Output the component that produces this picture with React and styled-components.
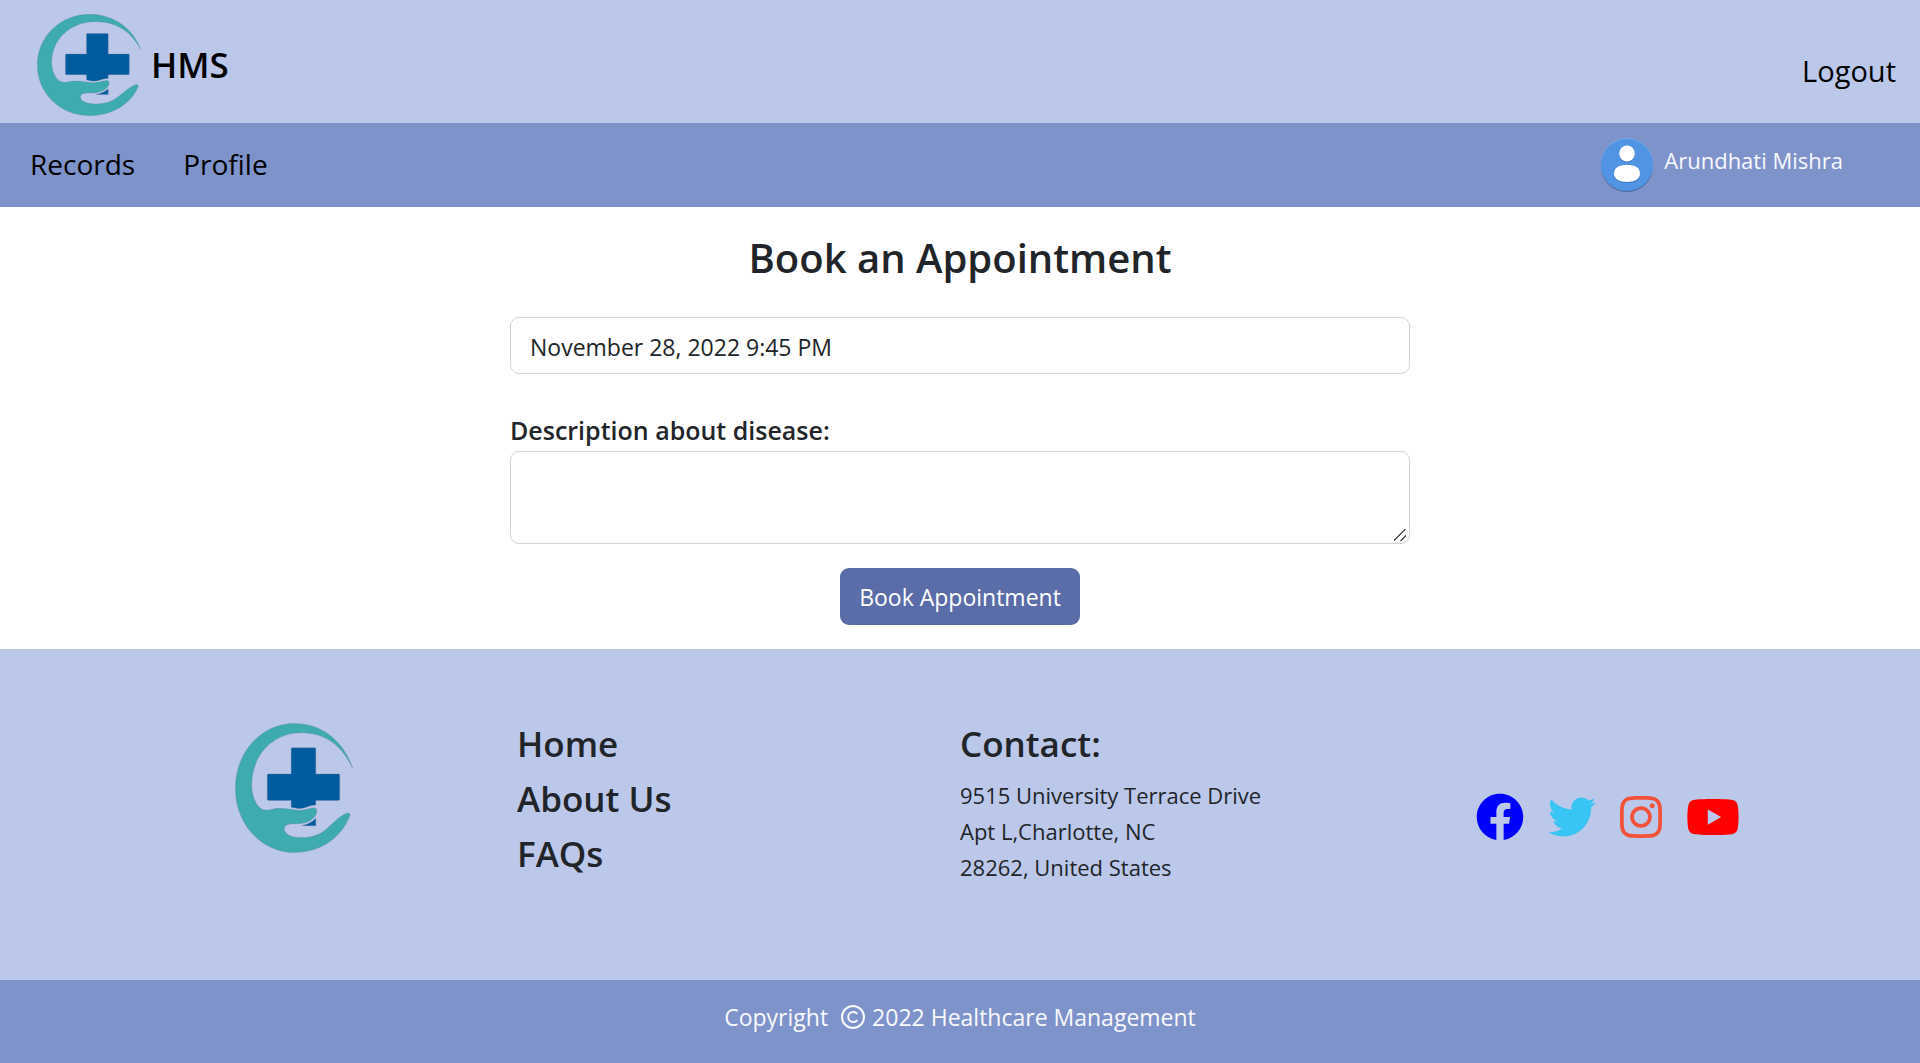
import React, { useState } from "react";
import styled, { createGlobalStyle } from "styled-components";
import { FaFacebook, FaTwitter, FaInstagram, FaYoutube } from "react-icons/fa";

const GlobalStyle = createGlobalStyle`
  *, *::before, *::after { box-sizing: border-box; }
  body {
    margin: 0;
    background: #fff;
    color: #212529;
    font-family: "Open Sans", "Noto Sans", sans-serif;
    font-size: 23px;
    line-height: 36px;
  }
  h1, h2, p { margin: 0; }
  a { color: inherit; text-decoration: none; }
`;

const Page = styled.div`
  display: flex;
  flex-direction: column;
  min-height: 100vh;
`;

const Header = styled.header`
  display: flex;
  justify-content: space-between;
  align-items: center;
  height: 123px;
  padding: 0 24px 0 37px;
  background: #bcc8ea;
  color: #000;
`;

const Brand = styled.a`
  display: flex;
  align-items: center;
  gap: 10px;
  padding-top: 6px;
  font-size: 35px;
  font-weight: 600;
`;

const NavLink = styled.a`
  color: #000;
  font-size: 28px;
  line-height: 42px;
`;

const LogoutLink = styled(NavLink)`
  padding-top: 19px;
  font-size: 29px;
`;

const NavBar = styled.nav`
  display: flex;
  justify-content: space-between;
  align-items: center;
  height: 84px;
  padding: 0 77px 0 30px;
  background: #7e93ca;
`;

const NavLinks = styled.div`
  display: flex;
  gap: 48px;
  padding-bottom: 2px;
`;

const User = styled.div`
  display: flex;
  align-items: flex-start;
  gap: 11px;
  color: #f8f9fa;
  font-size: 22px;
  line-height: 44px;
`;

const Main = styled.main`
  flex: 1;
  padding: 24px 24px;
`;

const Form = styled.form`
  display: flex;
  flex-direction: column;
  width: 100%;
  max-width: 900px;
  margin: 0 auto;
`;

const Title = styled.h1`
  margin-bottom: 33px;
  font-size: 40px;
  font-weight: 600;
  line-height: 53px;
  text-align: center;
`;

const fieldStyle = `
  width: 100%;
  border: 1px solid #ced4da;
  border-radius: 9px;
  background: #fff;
  color: #212529;
  font: inherit;
`;

const DateInput = styled.input`
  ${fieldStyle}
  height: 57px;
  margin-bottom: 38px;
  padding: 2px 19px 0;
`;

const Label = styled.label`
  margin-bottom: 3px;
  font-size: 25px;
  font-weight: 600;
  line-height: 36px;
`;

const TextArea = styled.textarea`
  ${fieldStyle}
  height: 93px;
  padding: 9px 19px;
  resize: vertical;

  &::-webkit-resizer {
    background: linear-gradient(
        135deg,
        transparent 44%,
        #555 44%,
        #555 53%,
        transparent 53%,
        transparent 71%,
        #555 71%,
        #555 80%,
        transparent 80%
      )
      0 1px / 12px 12px no-repeat;
  }
`;

const SubmitButton = styled.button`
  align-self: center;
  height: 57px;
  margin-top: 24px;
  padding: 1px 19px 0;
  border: 0;
  border-radius: 9px;
  background: #5a6da8;
  color: #fff;
  font: inherit;
`;

const Footer = styled.footer`
  display: grid;
  grid-template-columns: 282fr 443fr 516fr auto;
  align-items: start;
  min-height: 331px;
  padding: 73px 180px 78px 235px;
  background: #bcc8ea;
`;

const FooterLinks = styled.div`
  display: flex;
  flex-direction: column;
  gap: 12px;
`;

const footerHeading = `
  font-size: 35px;
  font-weight: 600;
  line-height: 43px;
`;

const FooterLink = styled.a`
  ${footerHeading}
`;

const FooterTitle = styled.h2`
  ${footerHeading}
  margin-bottom: 12px;
`;

const Address = styled.address`
  font-size: 22px;
  font-style: normal;
`;

const Socials = styled.div`
  display: flex;
  gap: 24px;
  padding-top: 71px;
`;

const SocialLink = styled.a`
  display: flex;
  color: ${(p) => p.$color};

  svg {
    width: ${(p) => p.$width}px;
    height: 48px;
  }
`;

const FooterLogo = styled.div`
  padding-top: 1px;
`;

const Copyright = styled.div`
  display: flex;
  justify-content: center;
  align-items: center;
  height: 83px;
  padding-bottom: 9px;
  background: #7e93ca;
  color: #f8f9fa;
`;

const CopyrightIcon = styled.svg`
  width: 24px;
  height: 24px;
  margin: 0 7px 0 13px;
`;

function Logo({ width, height }) {
  return (
    <svg
      width={width}
      height={height}
      viewBox="110 41 311 304"
      preserveAspectRatio="none"
      role="img"
      aria-label="HMS logo"
    >
      <g stroke="#71809f" strokeOpacity="0.55" strokeWidth="1.5" strokeLinejoin="round">
        <path
          fill="#3dabb0"
          d="M420 147C397 82 337 42 267 42C180 42 111 108 111 194C111 279 181 344 267 344C332 344 390 312 413 257C414 251 407 250 401 253C379 262 361 284 337 298C313 310 277 312 256 305C243 300 237 291 241 284C247 274 268 278 285 276C302 274 325 264 326 246C326 239 319 239 312 240C301 242 290 246 277 245C258 244 240 239 216 241C205 243 194 247 183 243C167 238 154 212 154 186C154 118 208 64 284 64C342 64 389 88 420 147Z"
        />
        <path
          fill="#005b9f"
          d="M260 99H321Q323 99 323 102V160H384Q386 160 386 163V219Q386 222 383 222H323V233C306 233 296 241 282 241C272 241 265 239 258 238V222H198Q195 222 195 219V163Q195 160 198 160H258V102Q258 99 260 99Z"
        />
        <path fill="#005b9f" d="M323 264V281H286C302 278 314 273 323 264Z" />
      </g>
    </svg>
  );
}

function Avatar() {
  return (
    <svg width="52" height="54" viewBox="0 0 52 54" aria-hidden="true">
      <circle cx="26" cy="28" r="26" fill="#4d6698" />
      <circle cx="26" cy="26" r="26" fill="#73a9e8" />
      <circle cx="26" cy="27" r="26" fill="#5094e3" />
      <ellipse cx="26" cy="16.5" rx="7.8" ry="8" fill="#3b77c0" />
      <ellipse cx="26" cy="15.5" rx="7.8" ry="8" fill="#fff" />
      <path fill="#3b77c0" d="M13 37C13 30 18 27 26 27S39 30 39 37C39 42 33 45 26 45S13 42 13 37Z" />
      <path fill="#fff" d="M13 36C13 29 18 27 26 27S39 29 39 36C39 41 33 44 26 44S13 41 13 36Z" />
    </svg>
  );
}

const socials = [
  { name: "Facebook", Icon: FaFacebook, color: "#0000ff", width: 48 },
  { name: "Twitter", Icon: FaTwitter, color: "#38c5f3", width: 48 },
  { name: "Instagram", Icon: FaInstagram, color: "#f4513b", width: 42 },
  { name: "YouTube", Icon: FaYoutube, color: "#ff0000", width: 54 },
];

export default function App() {
  const [date, setDate] = useState("November 28, 2022 9:45 PM");
  const [description, setDescription] = useState("");

  return (
    <>
      <GlobalStyle />
      <Page>
        <Header>
          <Brand href="#">
            <Logo width={104} height={102} />
            HMS
          </Brand>
          <LogoutLink href="#">Logout</LogoutLink>
        </Header>
        <NavBar>
          <NavLinks>
            <NavLink href="#">Records</NavLink>
            <NavLink href="#">Profile</NavLink>
          </NavLinks>
          <User>
            <Avatar />
            Arundhati Mishra
          </User>
        </NavBar>
        <Main>
          <Form onSubmit={(e) => e.preventDefault()}>
            <Title>Book an Appointment</Title>
            <DateInput
              type="text"
              aria-label="Appointment date and time"
              value={date}
              onChange={(e) => setDate(e.target.value)}
            />
            <Label htmlFor="description">Description about disease:</Label>
            <TextArea
              id="description"
              value={description}
              onChange={(e) => setDescription(e.target.value)}
            />
            <SubmitButton type="submit">Book Appointment</SubmitButton>
          </Form>
        </Main>
        <Footer>
          <FooterLogo>
            <Logo width={118} height={130} />
          </FooterLogo>
          <FooterLinks>
            <FooterLink href="#">Home</FooterLink>
            <FooterLink href="#">About Us</FooterLink>
            <FooterLink href="#">FAQs</FooterLink>
          </FooterLinks>
          <div>
            <FooterTitle>Contact:</FooterTitle>
            <Address>
              9515 University Terrace Drive
              <br />
              Apt L,Charlotte, NC
              <br />
              28262, United States
            </Address>
          </div>
          <Socials>
            {socials.map(({ name, Icon, color, width }) => (
              <SocialLink key={name} href="#" aria-label={name} $color={color} $width={width}>
                <Icon />
              </SocialLink>
            ))}
          </Socials>
        </Footer>
        <Copyright>
          Copyright
          <CopyrightIcon viewBox="0 0 24 24" fill="none" stroke="currentColor" strokeWidth="2" aria-hidden="true">
            <circle cx="12" cy="12" r="11" />
            <path d="M16.300 8.800C15.300 7.500 13.900 6.900 12.300 6.900C9.300 6.900 7.200 9.100 7.200 12S9.300 17.100 12.300 17.100C13.900 17.100 15.300 16.500 16.300 15.200" />
          </CopyrightIcon>
          2022 Healthcare Management
        </Copyright>
      </Page>
    </>
  );
}
